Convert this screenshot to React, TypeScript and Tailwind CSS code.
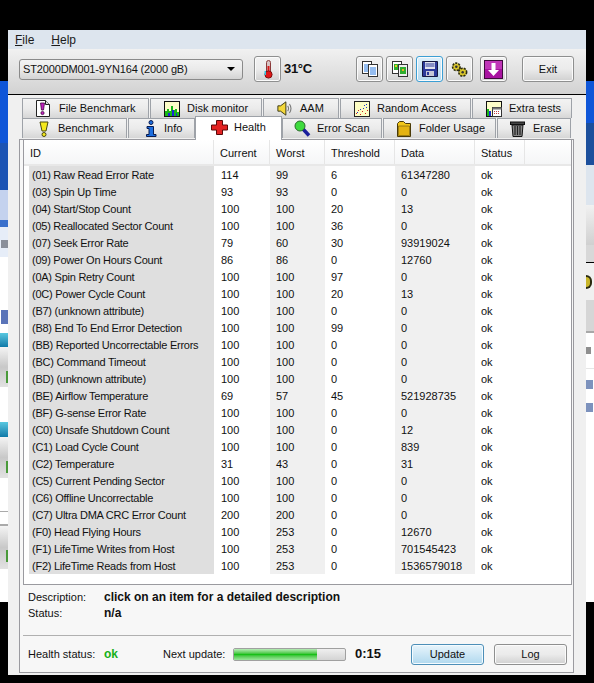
import React from "react";

const FONT = "[font-family:'Liberation_Sans',Arial,sans-serif]";

const rows: [string, string, string, string, string][] = [
  ["(01) Raw Read Error Rate", "114", "99", "6", "61347280"],
  ["(03) Spin Up Time", "93", "93", "0", "0"],
  ["(04) Start/Stop Count", "100", "100", "20", "13"],
  ["(05) Reallocated Sector Count", "100", "100", "36", "0"],
  ["(07) Seek Error Rate", "79", "60", "30", "93919024"],
  ["(09) Power On Hours Count", "86", "86", "0", "12760"],
  ["(0A) Spin Retry Count", "100", "100", "97", "0"],
  ["(0C) Power Cycle Count", "100", "100", "20", "13"],
  ["(B7) (unknown attribute)", "100", "100", "0", "0"],
  ["(B8) End To End Error Detection", "100", "100", "99", "0"],
  ["(BB) Reported Uncorrectable Errors", "100", "100", "0", "0"],
  ["(BC) Command Timeout", "100", "100", "0", "0"],
  ["(BD) (unknown attribute)", "100", "100", "0", "0"],
  ["(BE) Airflow Temperature", "69", "57", "45", "521928735"],
  ["(BF) G-sense Error Rate", "100", "100", "0", "0"],
  ["(C0) Unsafe Shutdown Count", "100", "100", "0", "12"],
  ["(C1) Load Cycle Count", "100", "100", "0", "839"],
  ["(C2) Temperature", "31", "43", "0", "31"],
  ["(C5) Current Pending Sector", "100", "100", "0", "0"],
  ["(C6) Offline Uncorrectable", "100", "100", "0", "0"],
  ["(C7) Ultra DMA CRC Error Count", "200", "200", "0", "0"],
  ["(F0) Head Flying Hours", "100", "253", "0", "12670"],
  ["(F1) LifeTime Writes from Host", "100", "253", "0", "701545423"],
  ["(F2) LifeTime Reads from Host", "100", "253", "0", "1536579018"],
];

const IFileBench = () => (
  <svg width="14" height="17" viewBox="0 0 14 17" className="shrink-0">
    <path d="M.5.500h9l4 4v12H.5z" fill="#fff" stroke="#222" />
    <path d="M9.500.5v4h4" fill="#ddd" stroke="#222" />
    <path d="M4.500 3h4l-1 7h-2z" fill="#c21fc0" stroke="#3d0a3d" strokeWidth=".8" />
    <circle cx="6.500" cy="13" r="1.600" fill="#c21fc0" stroke="#3d0a3d" strokeWidth=".8" />
  </svg>
);
const IDisk = () => (
  <svg width="16" height="16" viewBox="0 0 16 16" className="shrink-0">
    <rect x=".5" y=".5" width="15" height="15" fill="#fdfdc8" stroke="#111" />
    <path d="M1 15V10h2V8h2v2h2V5h2v4h2V8h2v3h2v4z" fill="#18b818" />
    <path d="M4 15v-3h2v3zM8 15V9h2v6zM12 15v-3h1v3z" fill="#1e28d8" />
  </svg>
);
const ISpeaker = () => (
  <svg width="16" height="15" viewBox="0 0 18 16" className="shrink-0">
    <path d="M1 5h3l6-4.500v15L4 11H1z" fill="#f4d83a" stroke="#2a2a10" />
    <path d="M12 5q2 3 0 6M14 3q3.500 5 0 10" fill="none" stroke="#777" strokeWidth="1.200" />
  </svg>
);
const IRandom = () => (
  <svg width="16" height="16" viewBox="0 0 16 16" className="shrink-0">
    <rect x=".5" y=".5" width="15" height="15" fill="#fdfdc4" stroke="#222" />
    <g fill="#d02020">
      <rect x="2" y="12" width="1" height="1" /><rect x="4" y="9" width="1" height="1" /><rect x="6" y="13" width="1" height="1" />
      <rect x="8" y="10" width="1" height="1" /><rect x="11" y="12" width="1" height="1" /><rect x="13" y="9" width="1" height="1" />
    </g>
    <g fill="#2030d0">
      <rect x="3" y="11" width="1" height="1" /><rect x="6" y="8" width="1" height="1" /><rect x="9" y="7" width="1" height="1" />
      <rect x="10" y="4" width="1" height="1" /><rect x="12" y="3" width="1" height="1" /><rect x="12" y="6" width="1" height="1" />
    </g>
  </svg>
);
const IExtra = () => (
  <svg width="16" height="16" viewBox="0 0 16 16" className="shrink-0">
    <rect x=".5" y=".5" width="15" height="15" fill="#fdfdc8" stroke="#111" />
    <path d="M1 15V8h2v7z" fill="#18b818" />
    <path d="M3 15V10h2v5z" fill="#1e28d8" />
    <rect x="6.500" y="6.500" width="9" height="9" fill="#fff" stroke="#333" />
    <rect x="6.500" y="6.500" width="9" height="2" fill="#777" />
    <path d="M8 10h1v1H8zM10 10h1v1h-1zM12 10h1v1h-1zM8 12h1v1H8zM10 12h1v1h-1zM12 12h1v1h-1z" fill="#c04040" />
  </svg>
);
const IBench = () => (
  <svg width="10" height="16" viewBox="0 0 10 16" className="shrink-0">
    <path d="M1 1h8L7 10H3z" fill="#f4e81c" stroke="#4a4a10" />
    <circle cx="5" cy="13.500" r="2" fill="#f4e81c" stroke="#4a4a10" />
  </svg>
);
const IInfo = () => (
  <svg width="12" height="17" viewBox="0 0 12 17" className="shrink-0">
    <circle cx="6" cy="2.500" r="2" fill="#1c6ee0" stroke="#0a1c50" />
    <path d="M2 6.500h6.500v8H11v2H1.500v-2H4v-6H2z" fill="#1c6ee0" stroke="#0a1c50" />
  </svg>
);
const ICross = () => (
  <svg width="17" height="15" viewBox="0 0 17 15" className="shrink-0">
    <path d="M5.500.5h6v4.500h5v5h-5v4.500h-6V10h-5V5h5z" fill="#e32222" stroke="#5a0808" />
  </svg>
);
const IMag = () => (
  <svg width="17" height="17" viewBox="0 0 17 17" className="shrink-0">
    <path d="M9 9l6 6.500" stroke="#1a1f9c" strokeWidth="3.500" />
    <circle cx="6" cy="6" r="5" fill="#3edb3e" stroke="#2a6a2a" />
  </svg>
);
const IFolder = () => (
  <svg width="16" height="16" viewBox="0 0 16 16" className="shrink-0">
    <path d="M1.500 15.500v-13l2-2h4l2 2h5v13z" fill="#f2c61a" stroke="#4a3a08" />
    <path d="M2.500 14.500V5h11v9.500z" fill="#e4b312" stroke="#6a5510" strokeWidth=".6" />
  </svg>
);
const ITrash = () => (
  <svg width="15" height="16" viewBox="0 0 15 16" className="shrink-0">
    <rect x=".5" y="1" width="14" height="2.500" fill="#444" stroke="#111" />
    <path d="M2 4h11l-1 11.500H3z" fill="#888" stroke="#111" />
    <path d="M5 5v9M7.500 5v9M10 5v9" stroke="#222" strokeWidth="1.200" />
  </svg>
);
const IThermo = () => (
  <svg width="12" height="19" viewBox="0 0 12 19">
    <rect x="4.500" y=".5" width="4" height="13" rx="2" fill="#d8c4c4" stroke="#8a3a3a" />
    <rect x="5.500" y="6" width="2" height="8" fill="#d81818" />
    <circle cx="6.500" cy="14.500" r="3.600" fill="#e11818" stroke="#7a1010" />
    <rect x="2.500" y="11" width="1.500" height="4" fill="#35c4e0" />
  </svg>
);
const ICopy = () => (
  <svg width="16" height="16" viewBox="0 0 16 16">
    <rect x=".5" y=".5" width="9" height="12" fill="#fff" stroke="#333" />
    <path d="M2 4h6M2 6h6M2 8h6M2 10h6" stroke="#2a7ae0" />
    <rect x="6.500" y="3.500" width="9" height="12" fill="#fff" stroke="#333" />
    <path d="M8 7h6M8 9h6M8 11h6M8 13h6" stroke="#2a7ae0" />
  </svg>
);
const ICopyImg = () => (
  <svg width="16" height="16" viewBox="0 0 16 16">
    <rect x=".5" y=".5" width="9" height="12" fill="#fff" stroke="#333" />
    <rect x="2" y="3" width="6" height="6" fill="#2fae2f" />
    <rect x="3" y="4" width="2" height="2" fill="#e8d020" />
    <rect x="6.500" y="3.500" width="9" height="12" fill="#eee" stroke="#333" />
    <rect x="8" y="6" width="6" height="7" fill="#2fae2f" />
    <rect x="10" y="8" width="2" height="2" fill="#e8b020" />
  </svg>
);
const ISave = () => (
  <svg width="16" height="16" viewBox="0 0 16 16">
    <path d="M.5.5h15v15H.5z" fill="#2b3a9a" stroke="#14183f" />
    <rect x="3" y="1" width="10" height="7" fill="#dfe3ee" />
    <path d="M3.500 3h9M3.500 5h9" stroke="#2b3a9a" />
    <rect x="4" y="10" width="8" height="5" fill="#c6c8d6" />
    <rect x="5" y="11" width="2" height="3" fill="#2b3a9a" />
  </svg>
);
const IGears = () => (
  <svg width="17" height="15" viewBox="0 0 16 14">
    <path d="M5 4.500L11 9.500" stroke="#2a2a10" strokeWidth="4" />
    <path d="M5 4.500L11 9.500" stroke="#d9c62c" strokeWidth="2" />
    <circle cx="5" cy="4.500" r="3.500" fill="#d9c62c" stroke="#2a2a10" strokeWidth="1.500" strokeDasharray="2 1" />
    <circle cx="5" cy="4.500" r="1.200" fill="#333" />
    <circle cx="11" cy="9.500" r="3.700" fill="#d9c62c" stroke="#2a2a10" strokeWidth="1.500" strokeDasharray="2 1" />
    <circle cx="11" cy="9.500" r="1.200" fill="#333" />
  </svg>
);
const IDown = () => (
  <svg width="19" height="19" viewBox="0 0 19 19">
    <rect x=".5" y=".5" width="18" height="18" fill="#a813a0" stroke="#3f0a3c" />
    <rect x="1" y="1" width="17" height="8" fill="#c036b8" />
    <path d="M7.500 3h4v7h3.500l-5.500 6-5.500-6h3.500z" fill="#fff" />
  </svg>
);

const Tab = ({ w, icon, label, gap }: { w: string; icon: React.ReactNode; label: string; gap: string }) => (
  <div className={`${w} ${gap} h-[20px] flex items-center border border-b-0 border-[#9ea2a8] bg-gradient-to-b from-[#f3f3f3] via-[#ebebeb] to-[#d6d6d6] text-[11px] text-[#111] whitespace-nowrap`}>
    {icon}
    <span>{label}</span>
  </div>
);

const ToolBtn = ({ children, blue }: { children: React.ReactNode; blue?: boolean }) => (
  <div className={`w-[27px] h-[26px] flex items-center justify-center rounded-[3px] border ${blue ? "border-[#3c9fd4] bg-gradient-to-b from-[#dff1fb] to-[#b5d9ee]" : "border-[#8e8f8f] bg-gradient-to-b from-[#f2f2f2] via-[#ebebeb] to-[#d0d0d0]"} shadow-[inset_0_0_0_1px_#fbfbfb]`}>
    {children}
  </div>
);

const H = ({ w, children }: { w: string; children?: React.ReactNode }) => (
  <div className={`${w} h-full pl-[6px] pt-[3px] flex items-center border-r border-[#e6e6e6]`}>{children}</div>
);

const GrayImg = ({ h }: { h: string }) => (
  <div className={`${h} shrink-0 flex justify-end bg-gradient-to-b from-[#f4f4f4] via-[#c8c8c8] to-[#e2e2e2]`}>
    <div className="w-[2px] h-[12px] mt-[24px] bg-[#4a9a3a]" />
  </div>
);

export default function App() {
  return (
    <div className={`${FONT} w-[594px] h-[683px] bg-black flex overflow-hidden text-[11px] text-[#111]`}>
      {/* Left sliver of the desktop behind the window */}
      <div className="w-[8px] h-[602px] flex flex-col overflow-hidden shrink-0 bg-white">
        <div className="h-[81px] bg-black shrink-0" />
        <div className="h-[62px] bg-[#0f56d8] shrink-0" />
        <div className="h-[47px] bg-[#1c54b4] shrink-0" />
        <div className="h-[30px] bg-[#c4d2ee] shrink-0" />
        <div className="h-[7px] bg-[#3a70cc] shrink-0" />
        <div className="h-[30px] bg-[#e6edf8] shrink-0 flex justify-end pt-[13px]">
          <div className="w-[7px] h-[8px] bg-[#8a8f9a]" />
        </div>
        <div className="h-[76px] bg-white shrink-0 flex justify-end pt-[53px]">
          <div className="w-[7px] h-[14px] bg-[#5a74b8]" />
        </div>
        <div className="h-[14px] bg-gradient-to-b from-[#58c8e0] to-[#0e7aa8] shrink-0" />
        <GrayImg h="h-[40px]" />
        <div className="h-[35px] bg-white shrink-0" />
        <div className="h-[15px] bg-gradient-to-b from-[#58c8e0] to-[#0e7aa8] shrink-0" />
        <GrayImg h="h-[41px]" />
        <div className="h-[33px] bg-white shrink-0" />
        <div className="h-[1px] bg-[#aaaaaa] shrink-0" />
        <div className="h-[12px] bg-white shrink-0" />
        <div className="h-[2px] bg-[#aaaaaa] shrink-0" />
        <GrayImg h="h-[43px]" />
        <div className="h-[33px] bg-white shrink-0" />
      </div>

      <div className="w-[578px] shrink-0 flex flex-col">
        <div className="h-[30px] bg-black shrink-0" />
        <div className="h-[645px] flex flex-col bg-[#f0f0f0]">
          {/* Menu */}
          <div className="h-[19px] bg-[#dde5ee] flex items-center pl-[7px] gap-[17px] text-[12px] text-[#1a1a1a] shrink-0">
            <span><span className="underline">F</span>ile</span>
            <span><span className="underline">H</span>elp</span>
          </div>

          {/* Toolbar */}
          <div className="h-[46px] shrink-0 border-b border-black bg-gradient-to-b from-[#f1f1f1] to-[#d2d2d2] flex items-center pl-[11px] pb-[5px]">
            <div className="w-[224px] h-[21px] rounded-[3px] border border-[#8a8a8a] bg-gradient-to-b from-[#f3f3f3] via-[#eaeaea] to-[#d4d4d4] flex items-center justify-between pl-[3px] pr-[7px] text-[11px] tracking-[-0.15px]">
              <span>ST2000DM001-9YN164 (2000 gB)</span>
              <span className="w-0 h-0 border-x-[4px] border-x-transparent border-t-[4px] border-t-black" />
            </div>
            <div className="ml-[11px]"><ToolBtn><IThermo /></ToolBtn></div>
            <span className="ml-[3px] w-[72px] font-bold text-[13px] tracking-[-0.3px]">31°C</span>
            <div className="flex gap-[3px]">
              <ToolBtn><ICopy /></ToolBtn>
              <ToolBtn><ICopyImg /></ToolBtn>
              <ToolBtn blue><ISave /></ToolBtn>
              <ToolBtn><IGears /></ToolBtn>
            </div>
            <div className="ml-[7px]"><ToolBtn><IDown /></ToolBtn></div>
            <div className="ml-[15px] w-[52px] h-[26px] rounded-[3px] border border-[#8e8f8f] bg-gradient-to-b from-[#f2f2f2] via-[#ebebeb] to-[#d0d0d0] shadow-[inset_0_0_0_1px_#fbfbfb] flex items-center justify-center">Exit</div>
          </div>

          {/* Tabs */}
          <div className="pt-[3px] pl-[14px] shrink-0">
            <div className="flex gap-[1px]">
              <Tab w="w-[127px] pl-[13px]" gap="gap-[9px]" icon={<IFileBench />} label="File Benchmark" />
              <Tab w="w-[112px] pl-[13px]" gap="gap-[7px]" icon={<IDisk />} label="Disk monitor" />
              <Tab w="w-[76px] pl-[13px]" gap="gap-[7px]" icon={<ISpeaker />} label="AAM" />
              <Tab w="w-[131px] pl-[13px]" gap="gap-[7px]" icon={<IRandom />} label="Random Access" />
              <Tab w="w-[100px] pl-[13px]" gap="gap-[7px]" icon={<IExtra />} label="Extra tests" />
            </div>
            <div className="flex h-[20px] items-start">
              <Tab w="w-[105px] pl-[16px]" gap="gap-[9px]" icon={<IBench />} label="Benchmark" />
              <div className="w-[1px]" />
              <Tab w="w-[67px] pl-[16px]" gap="gap-[7px]" icon={<IInfo />} label="Info" />
              <div className="relative z-10 w-[87px] h-[24px] -mt-[2px] pl-[15px] flex items-center gap-[6px] border border-b-0 border-[#9ea2a8] bg-white text-[11px] whitespace-nowrap pb-[3px]">
                <ICross />
                <span>Health</span>
              </div>
              <Tab w="w-[100px] pl-[11px]" gap="gap-[6px]" icon={<IMag />} label="Error Scan" />
              <div className="w-[1px]" />
              <Tab w="w-[113px] pl-[12px]" gap="gap-[7px]" icon={<IFolder />} label="Folder Usage" />
              <div className="w-[1px]" />
              <Tab w="w-[74px] pl-[12px]" gap="gap-[8px]" icon={<ITrash />} label="Erase" />
            </div>
          </div>

          {/* Tab page */}
          <div className="mt-[1px] ml-[11px] w-[555px] h-[534px] border border-[#9a9a9f] bg-[#f7f7f7] pl-[3px] pr-[1px] flex flex-col shrink-0">
            <div className="h-[445px] border border-t-0 border-[#9a9a9f] bg-white shrink-0">
              <div className="h-[26px] border-b-[2px] border-[#e8e8e8] flex bg-gradient-to-b from-white to-[#f5f6f7] text-[11px]">
                <H w="w-[190px]">ID</H>
                <H w="w-[56px]">Current</H>
                <H w="w-[55px]">Worst</H>
                <H w="w-[70px]">Threshold</H>
                <H w="w-[80px]">Data</H>
                <H w="w-[50px]">Status</H>
              </div>
              <div className="pl-[5px]">
                {rows.map((r) => (
                  <div key={r[0]} className="h-[17px] flex items-start leading-[18px] whitespace-nowrap">
                    <div className="w-[185px] h-full pl-[3px] bg-[#dfdfdf] tracking-[-0.25px]">{r[0]}</div>
                    <div className="w-[56px] h-full pl-[7px]">{r[1]}</div>
                    <div className="w-[55px] h-full pl-[6px] bg-[#f0f0f0]">{r[2]}</div>
                    <div className="w-[70px] h-full pl-[6px]">{r[3]}</div>
                    <div className="w-[80px] h-full pl-[6px] bg-[#f0f0f0]">{r[4]}</div>
                    <div className="w-[50px] h-full pl-[6px]">ok</div>
                  </div>
                ))}
              </div>
            </div>

            {/* Description */}
            <div className="h-[51px] shrink-0 border-b border-[#b0b0b0] pt-[4px] mr-[1px] pl-[5px]">
              <div className="flex h-[16px] items-center">
                <span className="w-[76px]">Description:</span>
                <span className="font-bold text-[12px]">click on an item for a detailed description</span>
              </div>
              <div className="flex h-[16px] items-center">
                <span className="w-[76px]">Status:</span>
                <span className="font-bold text-[12px]">n/a</span>
              </div>
            </div>

            {/* Status bar */}
            <div className="flex-1 flex items-center pl-[5px]">
              <span className="w-[76px]">Health status:</span>
              <span className="w-[59px] font-bold text-[#18b018] text-[12px]">ok</span>
              <span className="w-[70px]">Next update:</span>
              <div className="w-[113px] h-[13px] rounded-[2px] border border-[#a0a0a0] bg-gradient-to-b from-[#efefef] to-[#d4d4d4] overflow-hidden">
                <div className="w-[83px] h-full bg-gradient-to-b from-[#b6ecb6] via-[#18c018] to-[#9be69b]" />
              </div>
              <span className="ml-[9px] w-[56px] font-bold text-[13px]">0:15</span>
              <div className="w-[73px] h-[21px] rounded-[3px] border border-[#4d8fb8] bg-gradient-to-b from-[#e8f5fc] to-[#b0d8ee] shadow-[inset_0_0_0_1px_#f4fbff] flex items-center justify-center">Update</div>
              <div className="ml-[10px] w-[73px] h-[21px] rounded-[3px] border border-[#8e8f8f] bg-gradient-to-b from-[#f2f2f2] via-[#ebebeb] to-[#d0d0d0] shadow-[inset_0_0_0_1px_#fbfbfb] flex items-center justify-center">Log</div>
            </div>
          </div>
          <div className="flex-1" />
        </div>
      </div>

      {/* Right sliver */}
      <div className="w-[8px] h-[602px] flex flex-col overflow-hidden shrink-0 bg-white">
        <div className="h-[81px] bg-black shrink-0" />
        <div className="h-[42px] bg-[#0f56d8] shrink-0" />
        <div className="h-[42px] bg-[#1c4f9c] shrink-0" />
        <div className="h-[40px] bg-[#dde5ee] shrink-0" />
        <div className="h-[40px] bg-gradient-to-b from-[#f1f1f1] to-[#d0d0d0] shrink-0" />
        <div className="h-[17px] bg-[#d8d8d8] shrink-0" />
        <div className="h-[1px] bg-black shrink-0" />
        <div className="h-[37px] bg-[#f0f0f0] shrink-0 pt-[12px]">
          <div className="w-[6px] h-[14px] rounded-r-full bg-[#c9b62a] border-y-2 border-r-2 border-[#2a2a10]" />
        </div>
        <div className="h-[33px] bg-[#d6d6d6] border-b-2 border-[#a8a8a8] shrink-0" />
        <div className="h-[35px] bg-white shrink-0 pt-[14px]">
          <div className="w-[5px] h-[7px] bg-[#8f8f8f]" />
        </div>
        <div className="h-[1px] bg-[#e6e6e6] shrink-0" />
        <div className="h-[233px] bg-white shrink-0 flex flex-col pt-[11px] gap-[14px]">
          <div className="w-[7px] h-[9px] bg-[#7d92bd]" />
          <div className="w-[7px] h-[9px] bg-[#7d92bd]" />
        </div>
      </div>
    </div>
  );
}
